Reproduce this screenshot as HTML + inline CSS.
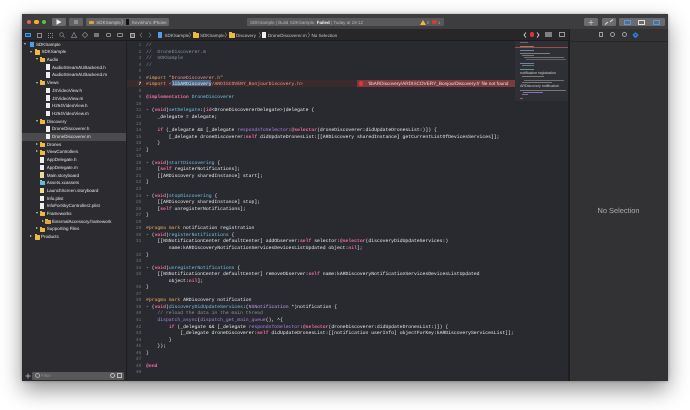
<!DOCTYPE html>
<html><head><meta charset="utf-8">
<style>
html,body{margin:0;padding:0;width:690px;height:410px;overflow:hidden;background:#fff}
*{box-sizing:border-box}
#all{position:absolute;left:0;top:0;width:690px;height:410px;overflow:hidden;filter:blur(.25px)}
#w{position:absolute;left:22px;top:14px;width:646.4px;height:367px;background:#2a2b30;box-shadow:0 9px 22px rgba(0,0,0,.42),0 0 3px rgba(0,0,0,.3);border-radius:2px 2px 0 0}
.a{position:absolute}
body{font-family:"Liberation Sans",sans-serif;text-rendering:geometricPrecision}
.r{position:absolute;font-size:4.53px;line-height:7.7px;height:7.7px;margin-top:1.2px;color:#e4e4e4;white-space:nowrap}
.t{position:absolute;width:0;height:0;border-left:1.7px solid transparent;border-right:1.7px solid transparent;border-top:2.6px solid #c8c8c8}
.tr{position:absolute;width:0;height:0;border-top:1.7px solid transparent;border-bottom:1.7px solid transparent;border-left:2.6px solid #c8c8c8}
.fo{position:absolute;width:5.6px;height:4.4px;background:#eeb93f;border-radius:.5px}
.fo:before{content:"";position:absolute;left:0;top:-1px;width:2.6px;height:1.2px;background:#eeb93f}
.fi{position:absolute;width:4.2px;height:5.6px;background:#eee}
pre{margin:0;position:absolute;font-family:"Liberation Mono",monospace;font-size:4.75px;line-height:6.55px;color:#e8e8e8;white-space:pre}
.k{color:#f06ca2;font-weight:bold}.c{color:#85909c}.p{color:#eda960}.g{color:#72c0de}.v{color:#ad82e8}.d{color:#bda2ec}.s{color:#f09880}.y{color:#7fc8da}
.b{position:absolute;height:8px;top:18px;background:#626265;border-radius:1.2px}
.m{position:absolute;height:.8px}
</style></head><body>
<div id="all">
<div id="w"></div>
<!-- toolbar -->
<div class="a" style="left:22px;top:14px;width:646.4px;height:15px;background:#3d3d40"></div>
<div class="a" style="left:27px;top:19.6px;width:4.4px;height:4.4px;border-radius:50%;background:#ee5f57"></div>
<div class="a" style="left:34.2px;top:19.6px;width:4.4px;height:4.4px;border-radius:50%;background:#f0b52e"></div>
<div class="a" style="left:41.8px;top:19.6px;width:4.4px;height:4.4px;border-radius:50%;background:#5fc03f"></div>
<div class="b" style="left:52px;width:14px;background:#6a6a6c"></div>
<svg class="a" style="left:56px;top:19px" width="6" height="6"><path d="M.5 .3V5.7L5.5 3Z" fill="#f2f2f2"/></svg>
<div class="b" style="left:69px;width:14px"></div>
<div class="a" style="left:74px;top:20px;width:4px;height:4px;background:#8d8d8f"></div>
<div class="b" style="left:86px;width:83px"></div>
<div class="a" style="left:89px;top:21px;width:5px;height:3px;background:#d9a13e;border-radius:1px"></div>
<div class="r" style="left:96.3px;top:18px;color:#c9c9c9">SDKSample</div>
<svg class="a" style="left:120.5px;top:19px" width="3" height="6"><path d="M.4 .4L2.2 3L.4 5.6" fill="none" stroke="#ccc" stroke-width=".5"/></svg>
<div class="a" style="left:126px;top:19px;width:3px;height:6px;background:#111;border-radius:.6px"></div>
<div class="r" style="left:132px;top:18px;color:#c9c9c9">Kevinho's iPhone</div>
<div class="b" style="left:247px;width:197px;background:#58585b"></div>
<div class="r" style="left:250px;top:18px;color:#b4b4b4">SDKSample | Build SDKSample: <b style="color:#eee">Failed</b> | Today at 19:12</div>
<svg class="a" style="left:420px;top:19.5px" width="6" height="5"><path d="M3 0L6 5H0Z" fill="#efb93b"/></svg>
<div class="r" style="left:427px;top:18px;font-size:4px;color:#bbb">2</div>
<div class="a" style="left:432px;top:19.6px;width:4.6px;height:4.6px;border-radius:50%;background:#e0353a"></div>
<div class="r" style="left:438px;top:18px;font-size:4px;color:#bbb">1</div>
<div class="b" style="left:584px;width:14px;background:#6c6c6f"></div>
<svg class="a" style="left:588px;top:19.5px" width="6" height="5"><path d="M3 0V5M.5 2.5H5.5" stroke="#e4e4e4" stroke-width=".6"/></svg>
<div class="b" style="left:602px;width:14px;background:#6c6c6f"></div>
<svg class="a" style="left:604px;top:19px" width="10" height="6"><path d="M1 5.5L4 3M6 3L9 .5" stroke="#ddd" stroke-width="1"/></svg>
<div class="b" style="left:619px;width:46px;background:#6a6a6d"></div>
<div class="a" style="left:624px;top:19.5px;width:7px;height:5px;border:.8px solid #4a9cf0;border-left-width:1.6px"></div>
<div class="a" style="left:638px;top:19.5px;width:7px;height:5px;border:.8px solid #e0e0e0;border-bottom-width:1.6px"></div>
<div class="a" style="left:653px;top:19.5px;width:7px;height:5px;border:.8px solid #4a9cf0;border-right-width:1.6px"></div>
<!-- nav rows -->
<div class="a" style="left:22px;top:29px;width:104px;height:352px;background:#2c2c30"></div>
<div class="a" style="left:126px;top:29px;width:1px;height:352px;background:#1e1e21"></div>
<div class="a" style="left:22px;top:29px;width:105px;height:12px;background:#29292c;border-bottom:.6px solid #1c1c1f"></div>
<div class="a" style="left:127px;top:29px;width:442px;height:12px;background:#27272a;border-bottom:.6px solid #1c1c1f"></div>
<div class="a" style="left:569px;top:29px;width:99.4px;height:352px;background:#323234"></div>
<div class="a" style="left:569px;top:29px;width:1px;height:352px;background:#1c1c1f"></div>
<div class="a" style="left:569px;top:40.6px;width:99.4px;height:.6px;background:#262628"></div>
<!-- nav tabs -->
<div class="a" style="left:25px;top:32.5px;width:5.5px;height:4.5px;border:.8px solid #3f96f0;background:#1d4c7e"></div>
<div class="a" style="left:36.5px;top:32.5px;width:5px;height:5px;border:.7px solid #8b8b8e"></div>
<div class="a" style="left:48px;top:32.5px;width:5px;height:5px;border:.7px dotted #8b8b8e"></div>
<svg class="a" style="left:59px;top:32px" width="6" height="6"><circle cx="2.5" cy="2.5" r="1.8" fill="none" stroke="#8b8b8e" stroke-width=".7"/><path d="M4 4L5.7 5.7" stroke="#8b8b8e" stroke-width=".7"/></svg>
<svg class="a" style="left:70.5px;top:32px" width="6" height="6"><path d="M3 .5L5.6 5.5H.4Z" fill="none" stroke="#8b8b8e" stroke-width=".7"/></svg>
<svg class="a" style="left:82px;top:32px" width="6" height="6"><path d="M3 .3L5.7 3L3 5.7L.3 3Z" fill="none" stroke="#8b8b8e" stroke-width=".7"/></svg>
<div class="a" style="left:94px;top:33px;width:5px;height:4px;background:#77777a"></div>
<div class="a" style="left:105.5px;top:33px;width:5.5px;height:3.6px;border:.7px solid #8b8b8e;border-radius:1.6px"></div>
<div class="a" style="left:117px;top:32.5px;width:5.5px;height:4px;border:.7px solid #8b8b8e;border-radius:1px"></div>
<!-- jump bar -->
<div class="a" style="left:129.5px;top:32.5px;width:5px;height:5px;border:.7px solid #aaa;background:#555"></div>
<svg class="a" style="left:139px;top:32px" width="14" height="6"><path d="M3 .7L1 3L3 5.3" fill="none" stroke="#777" stroke-width=".7"/><path d="M10 .7L12 3L10 5.3" fill="none" stroke="#777" stroke-width=".7"/></svg>
<div class="fi" style="left:157.5px;top:32px;background:#4f9de6"></div>
<div class="r" style="left:164.5px;top:30.6px;color:#c4c4c4">SDKSample</div>
<div class="fo" style="left:193px;top:33.2px"></div>
<div class="r" style="left:200px;top:30.6px;color:#c4c4c4">SDKSample</div>
<div class="fo" style="left:229px;top:33.2px"></div>
<div class="r" style="left:236px;top:30.6px;color:#c4c4c4">Discovery</div>
<div class="fi" style="left:261.5px;top:32px"></div>
<div class="r" style="left:268px;top:30.6px;color:#c4c4c4">DroneDiscoverer.m</div>
<div class="r" style="left:311.5px;top:30.6px;color:#c4c4c4">No Selection</div>
<svg class="a" style="left:189px;top:32px" width="130" height="6"><path d="M0 .5L1.6 3L0 5.5M36 .5L37.6 3L36 5.5M70 .5L71.6 3L70 5.5M119 .5L120.6 3L119 5.5" fill="none" stroke="#aaa" stroke-width=".5"/></svg>
<svg class="a" style="left:523px;top:32px" width="18" height="6"><path d="M3 .5L1 3L3 5.5M14 .5L16 3L14 5.5" fill="none" stroke="#e8e8e8" stroke-width=".8"/></svg>
<div class="a" style="left:529.6px;top:32.2px;width:4.4px;height:4.4px;border-radius:50%;background:#e53238"></div>
<div class="a" style="left:545px;top:32px;width:7px;height:5px;background:#7f7f82"></div>
<div class="a" style="left:559px;top:32px;width:6px;height:5px;border:.7px solid #999"></div>
<div class="a" style="left:599px;top:32px;width:4px;height:5.4px;border:.6px solid #9d9d9f"></div>
<div class="a" style="left:610px;top:32.4px;width:5px;height:5px;border:.6px solid #9d9d9f;border-radius:50%"></div>
<div class="a" style="left:621.6px;top:32.4px;width:5px;height:5px;border:.6px solid #9d9d9f;border-radius:50%"></div>
<svg class="a" style="left:632px;top:31.5px" width="7" height="6"><path d="M3.5 .2L6.6 2.6L4.6 5.6H2.4L.4 2.6Z" fill="#2a83ee"/><circle cx="3.5" cy="2.8" r=".9" fill="#323234"/></svg>
<!-- sidebar -->
<div class="a" style="left:22px;top:133px;width:104px;height:7.7px;background:#4b4b4e"></div>
<div class="t" style="left:24px;top:43px"></div><div class="fi" style="left:29.5px;top:41.5px;background:#4f9de6"></div><div class="r" style="left:36px;top:39.5px">SDKSample</div>
<div class="t" style="left:29.5px;top:50.7px"></div><div class="fo" style="left:34.5px;top:50.2px"></div><div class="r" style="left:41.5px;top:47.2px">SDKSample</div>
<div class="t" style="left:35.5px;top:58.4px"></div><div class="fo" style="left:39.7px;top:57.9px"></div><div class="r" style="left:46.7px;top:54.9px">Audio</div>
<div class="fi" style="left:45.6px;top:64.4px"></div><div class="r" style="left:52px;top:62.5px">AudioStreamAUBackend.h</div>
<div class="fi" style="left:45.6px;top:72px"></div><div class="r" style="left:52px;top:70.2px">AudioStreamAUBackend.m</div>
<div class="t" style="left:35.5px;top:81.5px"></div><div class="fo" style="left:39.7px;top:81px"></div><div class="r" style="left:46.7px;top:78px">Views</div>
<div class="fi" style="left:45.6px;top:87.5px"></div><div class="r" style="left:52px;top:85.7px">JSVideoView.h</div>
<div class="fi" style="left:45.6px;top:95.2px"></div><div class="r" style="left:52px;top:93.4px">JSVideoView.m</div>
<div class="fi" style="left:45.6px;top:102.9px"></div><div class="r" style="left:52px;top:101px">H264VideoView.h</div>
<div class="fi" style="left:45.6px;top:110.6px"></div><div class="r" style="left:52px;top:108.8px">H264VideoView.m</div>
<div class="t" style="left:35.5px;top:120px"></div><div class="fo" style="left:39.7px;top:119.5px"></div><div class="r" style="left:46.7px;top:116.5px">Discovery</div>
<div class="fi" style="left:45.6px;top:126px"></div><div class="r" style="left:52px;top:124.2px">DroneDiscoverer.h</div>
<div class="fi" style="left:45.6px;top:133.8px"></div><div class="r" style="left:52px;top:132px">DroneDiscoverer.m</div>
<div class="tr" style="left:36px;top:142.6px"></div><div class="fo" style="left:39.7px;top:143px"></div><div class="r" style="left:46.7px;top:139.6px">Drones</div>
<div class="tr" style="left:36px;top:150.3px"></div><div class="fo" style="left:39.7px;top:150.7px"></div><div class="r" style="left:46.7px;top:147.3px">ViewControllers</div>
<div class="fi" style="left:40.3px;top:157px"></div><div class="r" style="left:46.7px;top:155px">AppDelegate.h</div>
<div class="fi" style="left:40.3px;top:164.7px"></div><div class="r" style="left:46.7px;top:162.7px">AppDelegate.m</div>
<div class="fi" style="left:40.3px;top:172.4px;background:#f0d9a0"></div><div class="r" style="left:46.7px;top:170.4px">Main.storyboard</div>
<div class="fo" style="left:39.7px;top:181px;background:#5cbfe8"></div><div class="r" style="left:46.7px;top:178.1px">Assets.xcassets</div>
<div class="fi" style="left:40.3px;top:187.8px;background:#f0d9a0"></div><div class="r" style="left:46.7px;top:185.8px">LaunchScreen.storyboard</div>
<div class="fi" style="left:40.3px;top:195.5px"></div><div class="r" style="left:46.7px;top:193.5px">Info.plist</div>
<div class="fi" style="left:40.3px;top:203.2px"></div><div class="r" style="left:46.7px;top:201.2px">InfoForSkyController2.plist</div>
<div class="t" style="left:35.5px;top:212.4px"></div><div class="fo" style="left:39.7px;top:212px"></div><div class="r" style="left:46.7px;top:208.9px">Frameworks</div>
<div class="tr" style="left:41.5px;top:219.5px"></div><div class="fo" style="left:45px;top:219.5px;height:4.6px;background:#e0a93a"></div><div class="r" style="left:52px;top:216.6px">ExternalAccessory.framework</div>
<div class="tr" style="left:36px;top:227.2px"></div><div class="fo" style="left:39.7px;top:227.6px"></div><div class="r" style="left:46.7px;top:224.3px">Supporting Files</div>
<div class="tr" style="left:30px;top:235px"></div><div class="fo" style="left:34.5px;top:235.3px"></div><div class="r" style="left:41px;top:232px">Products</div>
<!-- filter -->
<svg class="a" style="left:25px;top:373px" width="6" height="6"><path d="M3 .5V5.5M.5 3H5.5" stroke="#c8c8c8" stroke-width=".7"/></svg>
<div class="a" style="left:32px;top:371.5px;width:92px;height:8.5px;background:#58585a;border-radius:1.2px"></div>
<div class="a" style="left:34.5px;top:373.2px;width:5px;height:5px;border:.7px solid #aaa;border-radius:50%"></div>
<div class="r" style="left:41px;top:371.2px;color:#8d8d8f">Filter</div>
<div class="a" style="left:110px;top:373.2px;width:5px;height:5px;border:.7px solid #bbb;border-radius:50%"></div>
<div class="a" style="left:116.5px;top:373.2px;width:5px;height:5px;border:.7px solid #bbb"></div>
<!-- editor -->
<div class="a" style="left:127px;top:41px;width:442px;height:340px;background:#292a30"></div>
<div class="a" style="left:127px;top:80.2px;width:230px;height:6.4px;background:#3b2a2e"></div>
<div class="a" style="left:357px;top:80.2px;width:158px;height:6.4px;background:#7c3a3d"></div>
<div class="a" style="left:171.7px;top:80.4px;width:39.5px;height:6px;background:#4a6a8d"></div>
<div class="a" style="left:358.5px;top:81.2px;width:4.6px;height:4.6px;border-radius:50%;background:#e0353a"></div>
<div class="r" style="left:368px;top:78.6px;font-size:4.72px;color:#eadcdc">'libARDiscovery/ARDISCOVERY_BonjourDiscovery.h' file not found</div>
<pre style="left:127px;top:43px;width:14.4px;text-align:right;color:#6d6e73">1
2
3
4
5
6
<b style="color:#e8e8e8">7</b>
8
9
10
11
12
13
14
15
16
17
18
19
20
21
22
23
24
25
26
27
28
29
30
31

32
33
34
35

36
37
38
39
40
41
42
43
44
45
46
47
48
49</pre>
<pre style="left:146px;top:43px"><span class="c">//</span>
<span class="c">//  DroneDiscoverer.m</span>
<span class="c">//  SDKSample</span>
<span class="c">//</span>

<span class="p">#import</span> <span class="s">"DroneDiscoverer.h"</span>
<span class="p">#import</span> <span class="s">&lt;</span><span style="color:#dfe6ee">libARDiscovery</span><span class="s">/ARDISCOVERY_BonjourDiscovery.h&gt;</span>

<span class="k">@implementation</span> <span class="g">DroneDiscoverer</span>

- (<span class="k">void</span>)<span class="g">setDelegate</span>:(<span class="k">id</span>&lt;DroneDiscovererDelegate&gt;)delegate {
    _delegate = delegate;

    <span class="k">if</span> (_delegate &amp;&amp; [_delegate <span class="v">respondsToSelector</span>:<span class="k">@selector</span>(droneDiscoverer:didUpdateDronesList:)]) {
        [_delegate droneDiscoverer:<span class="k">self</span> didUpdateDronesList:[[ARDiscovery sharedInstance] getCurrentListOfDevicesServices]];
    }
}

- (<span class="k">void</span>)<span class="g">startDiscovering</span> {
    [<span class="k">self</span> registerNotifications];
    [[ARDiscovery sharedInstance] start];
}

- (<span class="k">void</span>)<span class="g">stopDiscovering</span> {
    [[ARDiscovery sharedInstance] stop];
    [<span class="k">self</span> unregisterNotifications];
}

<span class="p">#pragma mark</span> notification registration
- (<span class="k">void</span>)<span class="g">registerNotifications</span> {
    [[NSNotificationCenter defaultCenter] addObserver:<span class="k">self</span> selector:<span class="k">@selector</span>(discoveryDidUpdateServices:)
        name:kARDiscoveryNotificationServicesDevicesListUpdated object:<span class="k">nil</span>];
}

- (<span class="k">void</span>)<span class="g">unregisterNotifications</span> {
    [[NSNotificationCenter defaultCenter] removeObserver:<span class="k">self</span> name:kARDiscoveryNotificationServicesDevicesListUpdated
        object:<span class="k">nil</span>];
}

<span class="p">#pragma mark</span> ARDiscovery notification
- (<span class="k">void</span>)<span class="g">discoveryDidUpdateServices</span>:(<span class="d">NSNotification</span> *)notification {
    <span class="c">// reload the data in the main thread</span>
    <span class="v">dispatch_async</span>(<span class="v">dispatch_get_main_queue</span>(), ^{
        <span class="k">if</span> (_delegate &amp;&amp; [_delegate <span class="v">respondsToSelector</span>:<span class="k">@selector</span>(droneDiscoverer:didUpdateDronesList:)]) {
            [_delegate droneDiscoverer:<span class="k">self</span> didUpdateDronesList:[[notification userInfo] objectForKey:kARDiscoveryServicesList]];
        }
    });
}

<span class="k">@end</span></pre>
<!-- minimap -->
<div class="a" style="left:515px;top:41px;width:53px;height:60px;background:#2f3035"></div>
<div class="a" style="left:515px;top:47.2px;width:53px;height:1px;background:#9c4a4c"></div>
<div class="a" style="left:568px;top:41px;width:1px;height:340px;background:#1f1f22"></div>
<div class="m" style="left:520px;top:42px;width:8px;background:#666"></div>
<div class="m" style="left:520px;top:46px;width:14px;background:#9a7a50"></div>
<div class="m" style="left:520px;top:50px;width:14px;background:#5b8fa5"></div>
<div class="m" style="left:520px;top:53px;width:30px;background:#7d7d82"></div>
<div class="m" style="left:522px;top:55px;width:12px;background:#777"></div>
<div class="m" style="left:524px;top:57px;width:40px;background:#6e6e73"></div>
<div class="m" style="left:526px;top:59px;width:40px;background:#60606a"></div>
<div class="m" style="left:520px;top:63px;width:14px;background:#5b8fa5"></div>
<div class="m" style="left:522px;top:65px;width:12px;background:#777"></div>
<div class="m" style="left:520px;top:69px;width:14px;background:#5b8fa5"></div>
<div class="a" style="left:520px;top:71px;font-size:3.6px;line-height:5px;color:#cfcfcf;white-space:nowrap">notification registration</div>
<div class="m" style="left:522px;top:76px;width:22px;background:#777"></div>
<div class="m" style="left:524px;top:80px;width:40px;background:#6e6e73"></div>
<div class="m" style="left:522px;top:82px;width:30px;background:#777"></div>
<div class="a" style="left:520px;top:84px;font-size:3.6px;line-height:5px;color:#cfcfcf;white-space:nowrap">ARDiscovery notification</div>
<div class="m" style="left:520px;top:90px;width:46px;background:#777"></div>
<div class="m" style="left:523px;top:92px;width:20px;background:#8a6fc0"></div>
<div class="m" style="left:522px;top:94px;width:6px;background:#777"></div>
<div class="m" style="left:520px;top:98px;width:3px;background:#b0507a"></div>
<!-- inspector -->
<div class="a" style="left:569px;top:205.5px;width:99px;text-align:center;font-size:7.4px;line-height:10px;color:#aeaeae">No Selection</div>
</div>
</body></html>
